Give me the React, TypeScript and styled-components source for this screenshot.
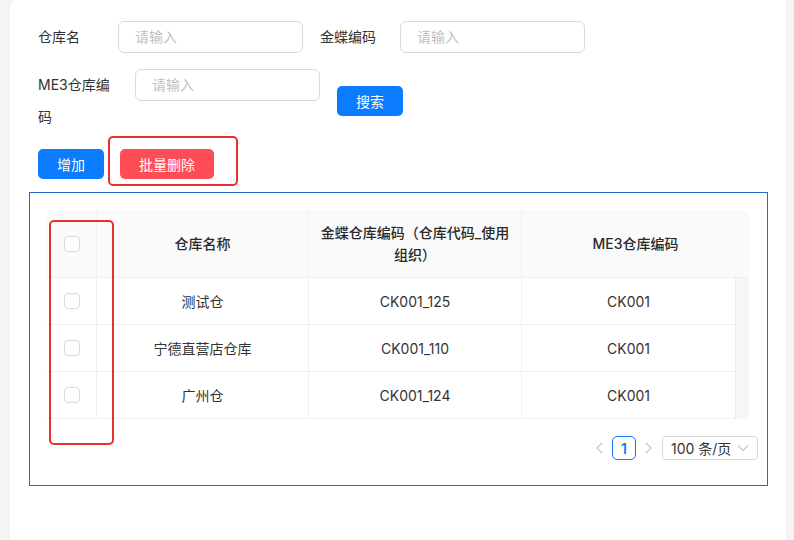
import React from 'react'
import styled, { createGlobalStyle } from 'styled-components'

const GlobalStyle = createGlobalStyle`
  html, body {
    margin: 0;
    padding: 0;
    background: #f4f4f5;
  }
  body {
    font-family: Inter, 'Noto Sans CJK SC', sans-serif;
    font-size: 14px;
    color: #333;
  }
  * {
    box-sizing: border-box;
  }
`

const Page = styled.div`
  display: flex;
  min-height: 540px;
  padding: 0 8px 0 10px;
`

const Card = styled.div`
  position: relative;
  flex: 1;
  background: #fff;
  border-top-left-radius: 8px;
  padding: 21px 0 0 28px;
`

const FormRow = styled.div<{ $top?: number }>`
  display: flex;
  align-items: flex-start;
  margin-top: ${(p) => p.$top || 0}px;
`

const Label = styled.div<{ $width: number; $pad?: number }>`
  width: ${(p) => p.$width}px;
  padding-right: ${(p) => p.$pad || 0}px;
  line-height: 32px;
  color: #333;
  flex-shrink: 0;
`

const Input = styled.div`
  width: 185px;
  height: 32px;
  border: 1px solid #d9d9d9;
  border-radius: 6px;
  padding-left: 16px;
  line-height: 30px;
  color: #bfbfbf;
  margin-right: 17px;
`

const Button = styled.div<{ $danger?: boolean }>`
  display: inline-flex;
  align-items: center;
  justify-content: center;
  height: 30px;
  padding: 0 19px;
  border-radius: 5px;
  color: #fff;
  background: ${(p) => (p.$danger ? '#ff4d57' : '#0b7bff')};
`

const SearchButton = styled(Button)`
  align-self: center;
`

const ActionRow = styled.div`
  display: flex;
  gap: 16px;
  margin-top: 16px;
`

const Frame = styled.div`
  width: 739px;
  height: 294px;
  margin: 13px 0 0 -9px;
  border: 1px solid #1f6ec6;
  padding: 17px 17px 0 17px;
`

const Table = styled.div`
  width: 702px;
`

const HeadRow = styled.div`
  display: grid;
  grid-template-columns: 50px 212px 213px 227px;
  height: 68px;
  background: #fafafa;
  border-radius: 8px 8px 0 0;
  border-bottom: 1px solid #f0f0f0;
`

const HeadCell = styled.div<{ $last?: boolean }>`
  display: flex;
  align-items: center;
  justify-content: center;
  text-align: center;
  padding: 0 10px;
  font-weight: 500;
  line-height: 22px;
  color: #2a2a2a;
  border-right: ${(p) => (p.$last ? 'none' : '1px solid #f0f0f0')};
`

const Body = styled.div`
  display: flex;
`

const Rows = styled.div`
  width: 688px;
`

const Row = styled.div`
  display: grid;
  grid-template-columns: 50px 212px 213px 213px;
  height: 47px;
  border-bottom: 1px solid #f0f0f0;
`

const Cell = styled.div<{ $last?: boolean }>`
  display: flex;
  align-items: center;
  justify-content: center;
  color: #333;
  border-right: ${(p) => (p.$last ? 'none' : '1px solid #f0f0f0')};
`

const Gutter = styled.div`
  width: 14px;
  background: #f6f6f6;
  border-left: 1px solid #ececec;
`

const Checkbox = styled.span`
  width: 16px;
  height: 16px;
  border: 1px solid #d9d9d9;
  border-radius: 4px;
  background: #fff;
`

const Pager = styled.div`
  display: flex;
  justify-content: flex-end;
  align-items: center;
  margin: 17px -8px 0 0;
  height: 24px;
`

const PagerArrow = styled.span`
  width: 24px;
  height: 24px;
  display: flex;
  align-items: center;
  justify-content: center;
`

const PageItem = styled.span`
  width: 24px;
  height: 24px;
  border: 1px solid #1677ff;
  border-radius: 5px;
  display: flex;
  align-items: center;
  justify-content: center;
  color: #1677ff;
  font-weight: 600;
`

const SizeSelect = styled.div`
  width: 96px;
  height: 24px;
  margin-left: 2px;
  border: 1px solid #d9d9d9;
  border-radius: 4px;
  display: flex;
  align-items: center;
  justify-content: space-between;
  padding: 0 8px 0 8px;
  color: #333;
`

const Mark = styled.div<{ $l: number; $t: number; $w: number; $h: number }>`
  position: absolute;
  left: ${(p) => p.$l}px;
  top: ${(p) => p.$t}px;
  width: ${(p) => p.$w}px;
  height: ${(p) => p.$h}px;
  border: 2.5px solid #e8302e;
  border-radius: 5px;
  pointer-events: none;
`

const Chevron = ({ dir, color }: { dir: 'left' | 'right' | 'down'; color: string }) => {
  const d =
    dir === 'left' ? 'M7 1 L2 6 L7 11' : dir === 'right' ? 'M3 1 L8 6 L3 11' : 'M1 3.5 L6 8.5 L11 3.5'
  return (
    <svg width={dir === 'down' ? 12 : 10} height="12" viewBox={dir === 'down' ? '0 0 12 12' : '0 0 10 12'}>
      <path d={d} fill="none" stroke={color} strokeWidth="1.1" />
    </svg>
  )
}

const rows = [
  { name: '测试仓', code: 'CK001_125', me3: 'CK001' },
  { name: '宁德直营店仓库', code: 'CK001_110', me3: 'CK001' },
  { name: '广州仓', code: 'CK001_124', me3: 'CK001' },
]

const App = () => (
  <>
    <GlobalStyle />
    <Page>
      <Card>
        <FormRow>
          <Label $width={80}>仓库名</Label>
          <Input>请输入</Input>
          <Label $width={80}>金蝶编码</Label>
          <Input>请输入</Input>
        </FormRow>
        <FormRow $top={16}>
          <Label $width={97} $pad={17}>ME3仓库编码</Label>
          <Input>请输入</Input>
          <SearchButton>搜索</SearchButton>
        </FormRow>
        <ActionRow>
          <Button>增加</Button>
          <Button $danger>批量删除</Button>
        </ActionRow>
        <Frame>
          <Table>
            <HeadRow>
              <HeadCell><Checkbox /></HeadCell>
              <HeadCell>仓库名称</HeadCell>
              <HeadCell>金蝶仓库编码（仓库代码_使用组织）</HeadCell>
              <HeadCell $last>ME3仓库编码</HeadCell>
            </HeadRow>
            <Body>
              <Rows>
                {rows.map((r) => (
                  <Row key={r.name}>
                    <Cell><Checkbox /></Cell>
                    <Cell>{r.name}</Cell>
                    <Cell>{r.code}</Cell>
                    <Cell $last>{r.me3}</Cell>
                  </Row>
                ))}
              </Rows>
              <Gutter />
            </Body>
          </Table>
          <Pager>
            <PagerArrow><Chevron dir="left" color="#c4c4c4" /></PagerArrow>
            <PageItem>1</PageItem>
            <PagerArrow><Chevron dir="right" color="#c4c4c4" /></PagerArrow>
            <SizeSelect>
              <span>100 条/页</span>
              <Chevron dir="down" color="#c4c4c4" />
            </SizeSelect>
          </Pager>
        </Frame>
        <Mark $l={98} $t={136} $w={130} $h={50} />
        <Mark $l={39} $t={220} $w={65} $h={225} />
      </Card>
    </Page>
  </>
)

export default App
